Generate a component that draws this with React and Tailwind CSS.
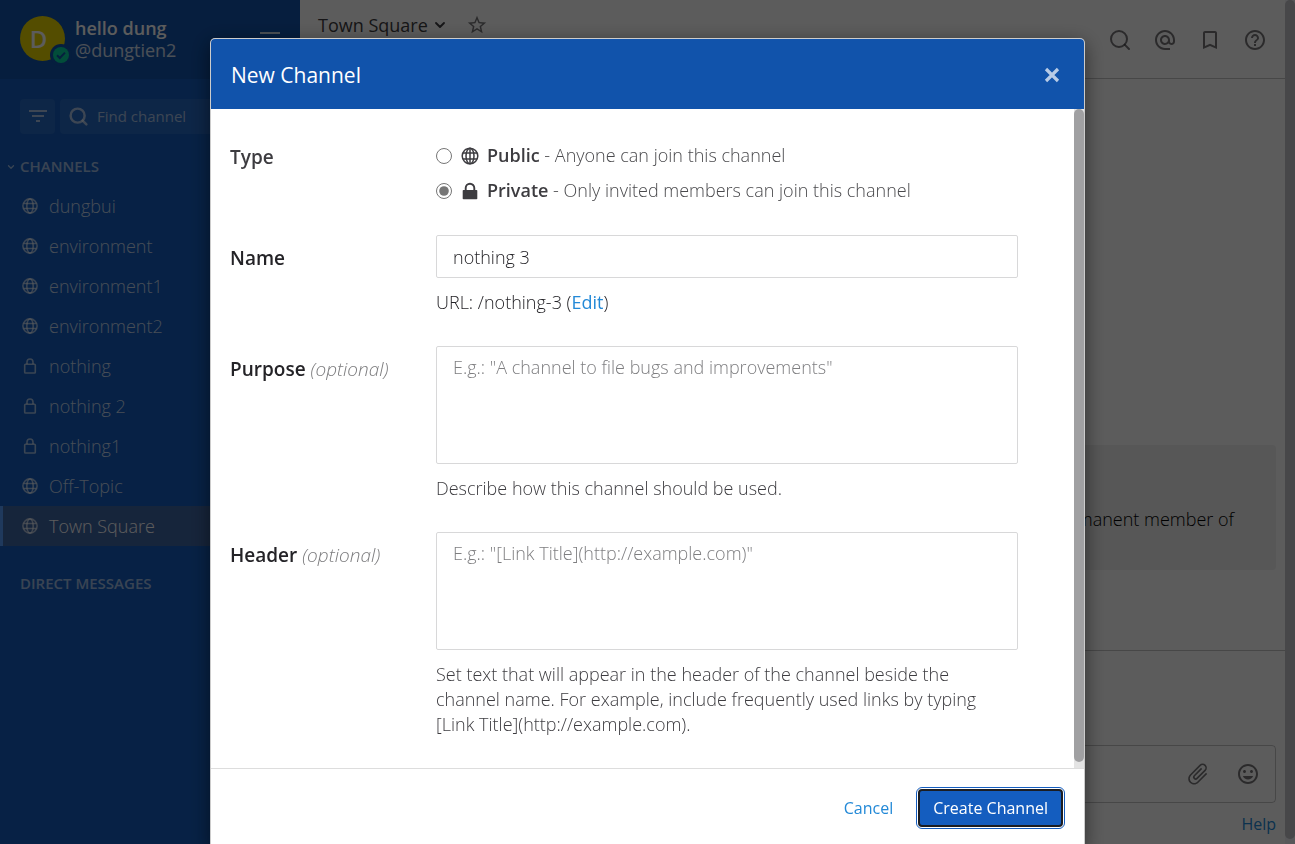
import { useState } from "react";
import {
  MdAlternateEmail,
  MdAttachFile,
  MdBookmarkBorder,
  MdStarOutline,
  MdHelpOutline,
  MdTagFaces,
} from "react-icons/md";
import { ChevronDown, Search } from "lucide-react";

const channels = [
  { name: "dungbui" },
  { name: "environment" },
  { name: "environment1" },
  { name: "environment2" },
  { name: "nothing", locked: true },
  { name: "nothing 2", locked: true },
  { name: "nothing1", locked: true },
  { name: "Off-Topic" },
  { name: "Town Square", active: true },
];

function GlobeIcon() {
  return (
    <svg viewBox="0 0 16 16" className="h-4 w-4" fill="none" stroke="currentColor" strokeWidth="1.6">
      <circle cx="8" cy="8" r="7.1" />
      <ellipse cx="8" cy="8" rx="3.2" ry="7.1" />
      <path d="M1.5 5.5h13M1.5 10.5h13" />
    </svg>
  );
}

function MeridianGlobeIcon() {
  return (
    <svg viewBox="0 0 18 18" className="h-[18px] w-[18px]" fill="none" stroke="currentColor" strokeWidth="1.5">
      <circle cx="9" cy="9" r="7.8" />
      <ellipse cx="9" cy="9" rx="4" ry="7.8" />
      <path d="M9 1v16M2 6h14M2 12h14" />
    </svg>
  );
}

function LockOutlineIcon() {
  return (
    <svg viewBox="0 0 16 16" className="h-4 w-4" fill="none" stroke="currentColor" strokeWidth="1.6">
      <rect x="2.7" y="6.2" width="10.6" height="8.8" rx="0.8" />
      <path d="M5 6V4a3 3 0 0 1 6 0v2" />
    </svg>
  );
}

function LockSolidIcon() {
  return (
    <svg viewBox="0 0 18 18" className="h-[18px] w-[18px]">
      <rect x="1.7" y="8" width="14.6" height="9.3" rx="0.8" fill="currentColor" />
      <path d="M4.7 9V6a4.3 4.3 0 0 1 8.6 0v3" fill="none" stroke="currentColor" strokeWidth="1.9" />
    </svg>
  );
}

function ChannelLink({ name, locked, active }) {
  return (
    <a
      href="#"
      className={
        active
          ? "flex h-10 items-center gap-[9px] border-l-[3px] border-[#579eff] bg-[#3f66a4] pl-[17px] text-lg font-light text-white"
          : "flex h-10 items-center gap-[9px] pl-5 text-lg font-light text-white/75"
      }
    >
      <span className="flex w-5 justify-center text-white/60">{locked ? <LockOutlineIcon /> : <GlobeIcon />}</span>
      {name}
    </a>
  );
}

function Sidebar() {
  return (
    <aside className="flex w-[300px] shrink-0 flex-col bg-[#145dbf]">
      <div className="flex h-[79px] items-center gap-[10px] bg-[#1153ab] px-5 pb-[2px] text-white">
        <div className="relative flex h-[45px] w-[45px] shrink-0 items-center justify-center rounded-full bg-[#e8d400] pr-2 text-2xl font-semibold text-white">
          D
          <span className="absolute -right-[7px] -bottom-[5px] flex h-[22px] w-[22px] items-center justify-center rounded-full bg-[#1153ab]">
            <svg viewBox="0 0 16 16" className="h-4 w-4">
              <circle cx="8" cy="8" r="8" fill="#06d6a0" />
              <path d="M4 8.2l2.8 2.8L12 5.6" fill="none" stroke="#1153ab" strokeWidth="2" />
            </svg>
          </span>
        </div>
        <div className="flex-1 text-lg leading-[22px]">
          <div className="font-semibold">hello dung</div>
          <div className="text-white/80">@dungtien2</div>
        </div>
        <button aria-label="Main menu" className="flex flex-col gap-1">
          <span className="h-[2px] w-5 bg-white/80" />
          <span className="h-[2px] w-5 bg-white/80" />
          <span className="h-[2px] w-5 bg-white/80" />
        </button>
      </div>
      <div className="flex gap-[5px] px-5 pt-5 text-white/60">
        <button aria-label="Filter" className="flex h-[35px] w-[35px] items-center justify-center rounded bg-white/8">
          <svg viewBox="0 0 18 14" className="h-[14px] w-[18px]" fill="currentColor">
            <path d="M0 0h18v2H0zM3 5h12v2H3zM7 10h4v2H7z" />
          </svg>
        </button>
        <button className="flex h-[35px] flex-1 items-center gap-2 rounded bg-white/8 pl-2 text-[15px]">
          <Search size={21} strokeWidth={2.8} />
          Find channel
        </button>
      </div>
      <h2 className="mt-5 flex h-[25px] items-center gap-1 pl-[6px] text-[15px] font-semibold text-white/60">
        <ChevronDown size={10} strokeWidth={3} />
        CHANNELS
      </h2>
      <nav className="mt-[7px]">
        {channels.map((channel) => (
          <ChannelLink key={channel.name} {...channel} />
        ))}
      </nav>
      <h2 className="mt-[25px] pl-5 text-[15px] leading-6 font-semibold text-white/60">DIRECT MESSAGES</h2>
    </aside>
  );
}

function ChannelView() {
  return (
    <main className="flex min-w-0 flex-1 flex-col bg-white text-[#3d3c40]">
      <header className="flex h-[79px] shrink-0 justify-between border-b border-[#3d3c40]/30 pr-7 pl-[18px]">
        <div className="flex h-[50px] items-center gap-[18px]">
          <button className="flex items-center gap-1 text-lg font-medium">
            Town Square
            <ChevronDown size={16} strokeWidth={2.8} />
          </button>
          <button aria-label="Favorite" className="text-[#3d3c40]/70">
            <MdStarOutline size={22} />
          </button>
        </div>
        <div className="flex items-center gap-[21px] pt-[2px] text-[#3d3c40]/70">
          <button aria-label="Search"><Search size={24} strokeWidth={2} /></button>
          <button aria-label="Mentions"><MdAlternateEmail size={24} /></button>
          <button aria-label="Saved"><MdBookmarkBorder size={24} /></button>
          <button aria-label="Help menu"><MdHelpOutline size={24} /></button>
        </div>
      </header>
      <div className="flex flex-1 flex-col justify-end pr-[19px] pb-20 pl-5">
        <div className="flex h-[125px] items-center justify-end rounded bg-[#3d3c40]/8 pt-[22px] pr-[42px] text-lg font-light text-black">
          permanent member of
        </div>
      </div>
      <div className="flex h-[194px] shrink-0 flex-col justify-end border-t border-[#3d3c40]/30 pr-[19px] pb-2 pl-5">
        <div className="flex h-[58px] items-center justify-end gap-[25px] rounded border border-[#3d3c40]/30 pr-[15px] text-[#3d3c40]/70">
          <button aria-label="Attach file"><MdAttachFile size={26} className="rotate-45" /></button>
          <button aria-label="Emoji"><MdTagFaces size={24} /></button>
        </div>
        <a href="#" className="mt-[9px] self-end text-base leading-6 text-[#2389d7]">Help</a>
      </div>
    </main>
  );
}

function Field({ id, label, optional, children }) {
  return (
    <>
      <div className="pt-[11px]">
        <label htmlFor={id} className="text-[19px] leading-[25px] font-semibold">
          {label}
          {optional && <span className="font-light text-[#7c7c7e] italic"> (optional)</span>}
        </label>
      </div>
      <div>{children}</div>
    </>
  );
}

function NewChannelDialog() {
  const [type, setType] = useState("private");
  const [name, setName] = useState("nothing 3");
  return (
    <div
      role="dialog"
      aria-labelledby="dialog-title"
      className="mx-auto mt-[38px] w-full max-w-[875px] rounded-[5px] border border-black/20 bg-white text-lg leading-[25px] font-light text-[#242327] shadow-[0_5px_20px_rgba(0,0,0,0.5)]"
    >
      <div className="flex h-[70px] items-center justify-between rounded-t bg-[#1153ab] px-5 pt-[2px] text-white">
        <h1 id="dialog-title" className="text-[21px] font-medium">New Channel</h1>
        <button aria-label="Close" className="pr-1 text-white/70">
          <svg viewBox="0 0 16 16" className="h-4 w-4">
            <path d="M2 2l12 12M14 2L2 14" stroke="currentColor" strokeWidth="3.2" />
          </svg>
        </button>
      </div>
      <div className="flex">
        <form className="grid flex-1 grid-cols-[206px_1fr] gap-y-[31px] pt-[34px] pr-14 pb-[31px] pl-[19px]">
          <div className="pt-[2px] text-[19px] font-semibold text-[#3d3c40]">Type</div>
          <div className="flex flex-col gap-[10px] pb-px text-[#4a4a4d]">
            <label className="flex items-center">
              <input
                type="radio"
                name="type"
                checked={type === "public"}
                onChange={() => setType("public")}
                className="mr-[9px] h-4 w-4 accent-[#767676]"
              />
              <span className="mr-2 text-[#3d3c40]"><MeridianGlobeIcon /></span>
              <span><b className="font-semibold text-[#3d3c40]">Public</b> - Anyone can join this channel</span>
            </label>
            <label className="flex items-center">
              <input
                type="radio"
                name="type"
                checked={type === "private"}
                onChange={() => setType("private")}
                className="mr-[9px] h-4 w-4 accent-[#767676]"
              />
              <span className="mr-2 text-[#3d3c40]"><LockSolidIcon /></span>
              <span><b className="font-semibold text-[#3d3c40]">Private</b> - Only invited members can join this channel</span>
            </label>
          </div>
          <Field id="name" label="Name">
            <input
              id="name"
              value={name}
              onChange={(e) => setName(e.target.value)}
              className="block h-[43px] w-full rounded-xs border border-[#d8d8d9] px-4"
            />
            <p className="mt-3">
              URL: /nothing-3 (<a href="#" className="font-normal text-[#2389d7]">Edit</a>)
            </p>
          </Field>
          <Field id="purpose" label="Purpose" optional>
            <textarea
              id="purpose"
              placeholder={'E.g.: "A channel to file bugs and improvements"'}
              className="block h-[118px] w-full resize-none rounded-xs border border-[#d8d8d9] px-4 py-2 placeholder:text-[#7e7e80]"
            />
            <p className="mt-3 pr-6 text-[#3d3c40]">Describe how this channel should be used.</p>
          </Field>
          <Field id="header" label="Header" optional>
            <textarea
              id="header"
              placeholder={'E.g.: "[Link Title](http://example.com)"'}
              className="block h-[118px] w-full resize-none rounded-xs border border-[#d8d8d9] px-4 py-2 placeholder:text-[#7e7e80]"
            />
            <p className="mt-3 pr-6 text-[#3d3c40]">
              Set text that will appear in the header of the channel beside the channel name. For example, include
              frequently used links by typing [Link Title](http://example.com).
            </p>
          </Field>
        </form>
        <div className="w-[10px] bg-[#e4e4e4] pb-[6px]">
          <div className="h-full rounded-full bg-[#a0a0a2]" />
        </div>
      </div>
      <div className="flex items-center justify-end gap-[25px] border-t border-[#dddddd] px-[21px] py-5 text-base font-normal">
        <button className="text-[#2389d7]">Cancel</button>
        <button className="h-[38px] rounded border-2 border-[#1b1d22] bg-[#145dbf] px-[13px] font-medium text-white outline-1 outline-offset-1 outline-[#145dbf]">
          Create Channel
        </button>
      </div>
    </div>
  );
}

export default function App() {
  return (
    <div className="h-screen overflow-hidden font-['Open_Sans',sans-serif]">
      <div className="flex h-full">
        <Sidebar />
        <ChannelView />
      </div>
      <div className="fixed inset-0 overflow-hidden bg-black/64">
        <NewChannelDialog />
        <div className="absolute inset-y-0 right-0 w-[10px] bg-[#58585a] pb-[5px]">
          <div className="h-full rounded-full bg-[#474749]" />
        </div>
      </div>
    </div>
  );
}
